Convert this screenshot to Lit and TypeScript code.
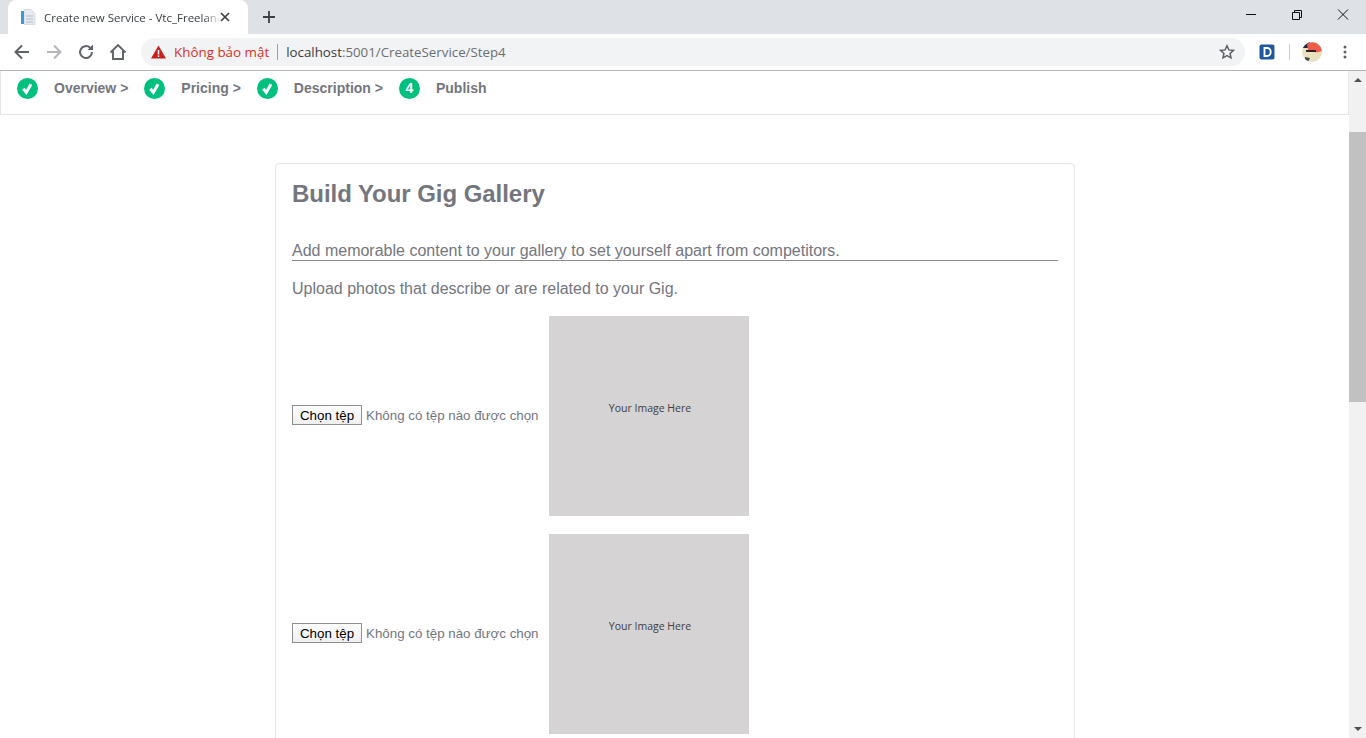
import { customElement } from "lit/decorators.js";
import { css, html, LitElement } from "lit";

const check = html`<svg class="step-icon" viewBox="0 0 21 21">
    <circle cx="10.5" cy="10.5" r="10.5" fill="#00c07f"></circle>
    <path d="M6.3 10.8l3 3.6 4.700-8.200" fill="none" stroke="#fff" stroke-width="3"></path>
</svg>`;

@customElement("app-root")
class AppRoot extends LitElement {
    static get styles() {
        return css`
            :host {
                display: block;
                width: 1366px;
                height: 738px;
                overflow: hidden;
                background: #fff;
                font-family: "Liberation Sans", Arial, sans-serif;
                color: #74767e;
            }

            .tabstrip {
                height: 34px;
                background: #dee1e6;
                display: flex;
                align-items: flex-end;
                padding-left: 8px;
            }

            .tab {
                width: 240px;
                height: 34px;
                box-sizing: border-box;
                background: #fff;
                border-radius: 8px 8px 0 0;
                display: flex;
                align-items: center;
                padding: 0 10px 0 12px;
                font: 11.5px "Open Sans", sans-serif;
                color: #3c4043;
            }

            .tab-title {
                width: 176px;
                margin-left: 8px;
                white-space: nowrap;
                overflow: hidden;
                -webkit-mask-image: linear-gradient(to right, #000 160px, transparent 176px);
                mask-image: linear-gradient(to right, #000 160px, transparent 176px);
            }

            .new-tab {
                margin: 0 0 0 14px;
                align-self: center;
                display: flex;
            }

            .window-controls {
                margin-left: auto;
                align-self: flex-start;
                display: flex;
            }

            .window-controls svg {
                width: 46px;
                height: 30px;
            }

            .toolbar {
                height: 37px;
                box-sizing: border-box;
                border-bottom: 1px solid #b5b5b7;
                display: flex;
                align-items: center;
                padding: 0 12px;
            }

            .nav-icon {
                width: 20px;
                height: 20px;
                margin-right: 12px;
                flex: none;
            }

            .omnibox {
                margin-left: 1px;
                width: 1104px;
                height: 28px;
                border-radius: 14px;
                background: #f1f3f4;
                display: flex;
                align-items: center;
                padding-left: 10px;
                box-sizing: border-box;
                font: 13.3px "Open Sans", sans-serif;
            }

            .insecure {
                color: #d93025;
                margin-left: 8px;
                white-space: nowrap;
                font-size: 13.4px;
            }

            .divider {
                width: 1px;
                height: 16px;
                background: #9aa0a6;
                margin: 0 8px;
            }

            .url {
                color: #6b6f73;
                white-space: nowrap;
            }

            .url b {
                font-weight: 400;
                color: #3c3c3c;
            }

            .star {
                margin-left: auto;
                margin-right: 10px;
                display: flex;
            }

            .ext {
                margin-left: 14px;
                display: flex;
            }

            .tool-divider {
                width: 1px;
                height: 16px;
                background: #c8cacc;
                margin: 0 12px 0 14px;
            }

            .avatar {
                display: flex;
            }

            .menu {
                margin-left: 21px;
                display: flex;
            }

            .viewport {
                height: 667px;
                display: flex;
            }

            .page {
                flex: 1;
                min-width: 0;
                overflow: hidden;
            }

            .steps {
                height: 44px;
                box-sizing: border-box;
                border: 1px solid #e4e5e7;
                border-top: none;
                display: flex;
                align-items: flex-start;
                padding: 6px 0 0 16px;
                font-size: 14px;
                font-weight: 700;
            }

            .step {
                display: flex;
                align-items: center;
                height: 22px;
                margin-right: 16px;
                white-space: nowrap;
            }

            .step-icon {
                width: 21px;
                height: 21px;
                margin-right: 16px;
                flex: none;
            }

            .step-number {
                width: 21px;
                height: 21px;
                border-radius: 50%;
                background: #00c07f;
                color: #fff;
                display: flex;
                align-items: center;
                justify-content: center;
                font-size: 14px;
                margin-right: 16px;
            }

            .card {
                width: 800px;
                box-sizing: border-box;
                margin: 48px 0 0 275px;
                border: 1px solid #e4e5e7;
                border-radius: 4px;
                padding: 16px;
            }

            h1 {
                margin: 0;
                font-size: 24px;
                line-height: 28px;
                font-weight: 700;
                letter-spacing: -0.05px;
            }

            .lead {
                margin: 34px 0 0;
                font-size: 16px;
                line-height: 18px;
                border-bottom: 1px solid #8c8c8c;
            }

            .hint {
                margin: 19px 0 0;
                font-size: 16px;
                line-height: 18px;
            }

            .uploads {
                margin-top: 18px;
                display: flex;
                flex-direction: column;
                gap: 18px;
            }

            .upload {
                display: flex;
                align-items: center;
            }

            .file {
                width: 257px;
                margin-bottom: 2px;
                display: flex;
                align-items: center;
                font-size: 13.33px;
            }

            .file button {
                width: 70px;
                height: 20px;
                box-sizing: border-box;
                padding: 0;
                border: 1px solid #8f8f8f;
                border-radius: 0;
                background: linear-gradient(#fdfdfd, #efefef);
                color: #000;
                font: 13.33px "Liberation Sans", Arial, sans-serif;
            }

            .file span {
                margin-left: 4px;
                white-space: nowrap;
            }

            .placeholder {
                width: 200px;
                height: 200px;
                background: #d5d3d4;
                color: #3e3e3e;
                font: 10.5px "Open Sans", sans-serif;
                text-align: center;
                padding: 85px 0 0 2px;
                box-sizing: border-box;
                line-height: 14px;
            }

            .scrollbar {
                width: 17px;
                background: #f1f1f1;
                display: flex;
                flex-direction: column;
                align-items: center;
            }

            .arrow-up {
                margin-top: 7px;
                width: 0;
                height: 0;
                border: 4px solid transparent;
                border-top: none;
                border-bottom: 4px solid #505050;
            }

            .thumb {
                width: 100%;
                height: 270px;
                background: #c1c1c1;
                margin-top: 50px;
            }

            .arrow-down {
                margin-top: auto;
                margin-bottom: 7px;
                width: 0;
                height: 0;
                border: 4px solid transparent;
                border-bottom: none;
                border-top: 4px solid #505050;
            }
        `;
    }

    private renderUpload() {
        return html`
            <div class="upload">
                <div class="file">
                    <button>Chọn tệp</button>
                    <span>Không có tệp nào được chọn</span>
                </div>
                <div class="placeholder">Your Image Here</div>
            </div>
        `;
    }

    protected render() {
        return html`
            <div class="tabstrip">
                <div class="tab">
                    <svg width="16" height="16" viewBox="0 0 16 16">
                        <path d="M4 0.500h7l4 4v11H4z" fill="#e6eaee" stroke="#ccd3da" stroke-width="0.700"></path>
                        <rect x="1" y="2" width="3" height="13" fill="#3d9ad6"></rect>
                        <path d="M6 7h7M6 10h7M6 13h7" stroke="#b3bec9"></path>
                    </svg>
                    <span class="tab-title">Create new Service - Vtc_Freelancer</span>
                    <svg width="10" height="10" viewBox="0 0 10 10">
                        <path d="M1 1l8 8M9 1l-8 8" stroke="#3c4043" stroke-width="1.700"></path>
                    </svg>
                </div>
                <svg class="new-tab" width="14" height="14" viewBox="0 0 14 14">
                    <path d="M7 1v12M1 7h12" stroke="#3c4043" stroke-width="1.800"></path>
                </svg>
                <div class="window-controls">
                    <svg viewBox="0 0 46 30"><path d="M18 14.500h10" stroke="#111"></path></svg>
                    <svg viewBox="0 0 46 30">
                        <path d="M18.500 12.500h7v7h-7zM20.500 12.500v-2h7v7h-2" fill="none" stroke="#111"></path>
                    </svg>
                    <svg viewBox="0 0 46 30"><path d="M18 9.500l10 10M28 9.500l-10 10" stroke="#111"></path></svg>
                </div>
            </div>
            <div class="toolbar">
                <svg class="nav-icon" viewBox="0 0 20 20">
                    <path d="M17 10H4M10 3.500L3.500 10l6.500 6.500" fill="none" stroke="#5f6368" stroke-width="2"></path>
                </svg>
                <svg class="nav-icon" viewBox="0 0 20 20">
                    <path d="M3 10h13M10 3.500l6.500 6.500-6.500 6.500" fill="none" stroke="#b4b6b9" stroke-width="2"></path>
                </svg>
                <svg class="nav-icon" viewBox="0 0 20 20">
                    <path d="M16 10a6 6 0 1 1-1.800-4.200" fill="none" stroke="#5f6368" stroke-width="2"></path>
                    <path d="M11.500 8H17V2.500z" fill="#5f6368"></path>
                </svg>
                <svg class="nav-icon" viewBox="0 0 20 20">
                    <path d="M2.500 10.500L10 3l7.500 7.500M5 9v8h10V9" fill="none" stroke="#5f6368" stroke-width="1.900"></path>
                </svg>
                <div class="omnibox">
                    <svg width="15" height="14" viewBox="0 0 15 14">
                        <path d="M7.500 0.500L15 13.500H0z" fill="#c5221f"></path>
                        <path d="M7.500 5v4.500M7.500 10.500v1.500" stroke="#fff" stroke-width="1.500"></path>
                    </svg>
                    <span class="insecure">Không bảo mật</span>
                    <span class="divider"></span>
                    <span class="url"><b>localhost</b>:5001/CreateService/Step4</span>
                    <svg class="star" width="16" height="16" viewBox="0 0 16 16">
                        <path d="M8 1.800l1.900 4.100 4.500.500-3.300 3 .9 4.400L8 11.600l-4 2.200.9-4.400-3.300-3 4.500-.500z" fill="none" stroke="#5f6368" stroke-width="1.500"></path>
                    </svg>
                </div>
                <svg class="ext" width="16" height="16" viewBox="0 0 16 16">
                    <rect width="15" height="15" x="0.500" y="0.500" rx="2" fill="#20589f"></rect>
                    <path d="M5.500 4h2.700a3.500 4 0 0 1 0 8H5.500z" fill="none" stroke="#fff" stroke-width="1.900"></path>
                </svg>
                <span class="tool-divider"></span>
                <svg class="avatar" width="20" height="20" viewBox="0 0 20 20">
                    <defs><clipPath id="av"><circle cx="10" cy="10" r="10"></circle></clipPath></defs>
                    <g clip-path="url(#av)">
                        <rect width="20" height="20" fill="#e9e2bd"></rect>
                        <path d="M0 0h8v6H0z" fill="#23283f"></path>
                        <path d="M5 2q6-4 15 0v7q-4 2-8 1l-6-2z" fill="#ec5d4d"></path>
                        <path d="M4 8h10v2H4z" fill="#2e2230"></path>
                        <path d="M3 15l5 1-2 4H3z" fill="#3c4a52"></path>
                    </g>
                </svg>
                <svg class="menu" width="4" height="14" viewBox="0 0 4 14">
                    <circle cx="2" cy="2" r="1.500" fill="#5f6368"></circle>
                    <circle cx="2" cy="7" r="1.500" fill="#5f6368"></circle>
                    <circle cx="2" cy="12" r="1.500" fill="#5f6368"></circle>
                </svg>
            </div>
            <div class="viewport">
                <div class="page">
                    <div class="steps">
                        <div class="step">${check}Overview &gt;</div>
                        <div class="step">${check}Pricing &gt;</div>
                        <div class="step">${check}Description &gt;</div>
                        <div class="step"><span class="step-number">4</span>Publish</div>
                    </div>
                    <div class="card">
                        <h1>Build Your Gig Gallery</h1>
                        <p class="lead">Add memorable content to your gallery to set yourself apart from competitors.</p>
                        <p class="hint">Upload photos that describe or are related to your Gig.</p>
                        <div class="uploads">${this.renderUpload()}${this.renderUpload()}</div>
                    </div>
                </div>
                <div class="scrollbar">
                    <div class="arrow-up"></div>
                    <div class="thumb"></div>
                    <div class="arrow-down"></div>
                </div>
            </div>
        `;
    }
}

export default AppRoot;
